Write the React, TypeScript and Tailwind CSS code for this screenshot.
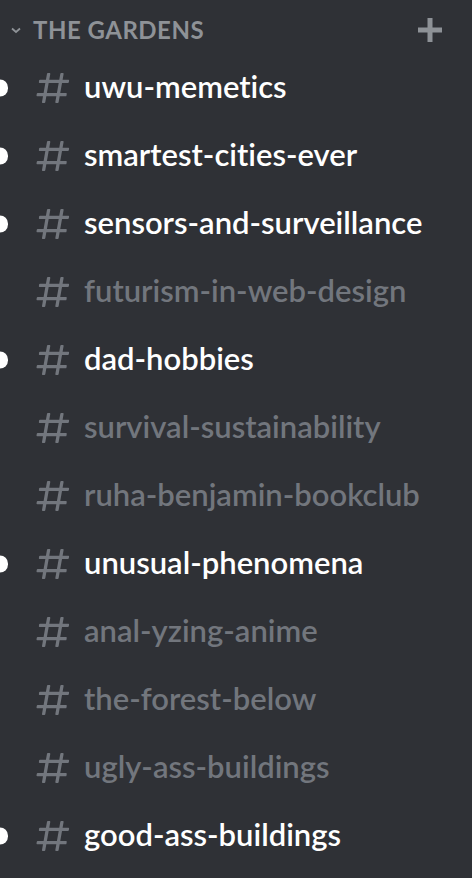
import React from 'react';

type Channel = {
    name: string;
    unread: boolean;
};

const channels: Channel[] = [
    { name: 'uwu-memetics', unread: true },
    { name: 'smartest-cities-ever', unread: true },
    { name: 'sensors-and-surveillance', unread: true },
    { name: 'futurism-in-web-design', unread: false },
    { name: 'dad-hobbies', unread: true },
    { name: 'survival-sustainability', unread: false },
    { name: 'ruha-benjamin-bookclub', unread: false },
    { name: 'unusual-phenomena', unread: true },
    { name: 'anal-yzing-anime', unread: false },
    { name: 'the-forest-below', unread: false },
    { name: 'ugly-ass-buildings', unread: false },
    { name: 'good-ass-buildings', unread: true },
];

const HashIcon = () => (
    <svg width="40" height="40" viewBox="0 0 24 24" className="shrink-0 text-[#72767d]">
        <path
            fill="currentColor"
            fillRule="evenodd"
            d="M5.88657 21C5.57547 21 5.3399 20.7189 5.39427 20.4126L6.00001 17H2.59511C2.28449 17 2.04905 16.7198 2.10259 16.4138L2.27759 15.4138C2.31946 15.1746 2.52722 15 2.77011 15H6.35001L7.41001 9H4.00511C3.69449 9 3.45905 8.71977 3.51259 8.41381L3.68759 7.41381C3.72946 7.17456 3.93722 7 4.18011 7H7.76001L8.39677 3.41262C8.43914 3.17391 8.64664 3 8.88907 3H9.87344C10.1845 3 10.4201 3.28107 10.3657 3.58738L9.76001 7H15.76L16.3968 3.41262C16.4391 3.17391 16.6466 3 16.8891 3H17.8734C18.1845 3 18.4201 3.28107 18.3657 3.58738L17.76 7H21.1649C21.4755 7 21.711 7.28023 21.6574 7.58619L21.4824 8.58619C21.4406 8.82544 21.2328 9 20.9899 9H17.41L16.35 15H19.7549C20.0655 15 20.301 15.2802 20.2474 15.5862L20.0724 16.5862C20.0306 16.8254 19.8228 17 19.5799 17H16L15.3632 20.5874C15.3209 20.8261 15.1134 21 14.8709 21H13.8866C13.5755 21 13.3399 20.7189 13.3943 20.4126L14 17H8.00001L7.36325 20.5874C7.32088 20.8261 7.11337 21 6.87094 21H5.88657ZM9.41045 9L8.35045 15H14.3504L15.4104 9H9.41045Z"
        />
    </svg>
);

export default function App() {
    return (
        <div className="w-[472px] h-[878px] bg-[#2f3136] overflow-hidden [font-variant-ligatures:none]" style={{ fontFamily: 'Lato, "Noto Sans", sans-serif' }}>
            {/* category header */}
            <div className="h-[54px] pt-[6px] flex items-center pl-[10px] pr-[30px]">
                <svg width="12" height="12" viewBox="0 0 12 12" className="text-[#8e9297] mr-[11px]">
                    <path d="M2 4.5 L6 8 L10 4.5" fill="none" stroke="currentColor" strokeWidth="1.8" />
                </svg>
                <span className="text-[24px] font-bold uppercase tracking-[0.5px] text-[#8e9297] flex-1 leading-none">
                    The Gardens
                </span>
                <svg width="24" height="24" viewBox="0 0 24 24" className="text-[#8e9297]">
                    <path d="M12 0 V24 M0 12 H24" stroke="currentColor" strokeWidth="5" />
                </svg>
            </div>

            {/* channel list */}
            <div className="flex flex-col">
                {channels.map(ch => (
                    <div key={ch.name} className="relative h-[68px] flex items-center pl-[33px]">
                        {ch.unread && (
                            <div className="absolute left-0 top-1/2 -translate-y-1/2 w-[8px] h-[17px] bg-white rounded-r-full" />
                        )}
                        <HashIcon />
                        <span
                            className={`ml-[11px] mb-[3px] text-[31px] font-semibold leading-none ${ch.unread ? 'text-white' : 'text-[#72767d]'}`}
                        >
                            {ch.name}
                        </span>
                    </div>
                ))}
            </div>
        </div>
    );
}
